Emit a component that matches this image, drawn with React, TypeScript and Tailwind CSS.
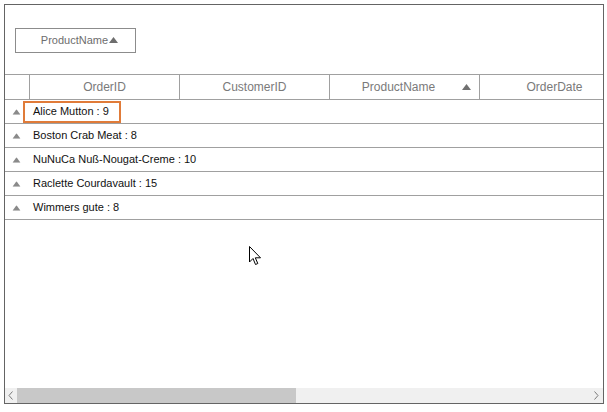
import React from 'react';

const COLUMNS = [
  { name: 'OrderID', width: 150 },
  { name: 'CustomerID', width: 150 },
  { name: 'ProductName', width: 150, sorted: true },
  { name: 'OrderDate', width: 150 },
];

const GROUPS = [
  'Alice Mutton : 9',
  'Boston Crab Meat : 8',
  'NuNuCa Nuß-Nougat-Creme : 10',
  'Raclette Courdavault : 15',
  'Wimmers gute : 8',
];

function UpTriangle({ className }: { className?: string }) {
  return (
    <svg width="9" height="6" viewBox="0 0 9 6" className={className}>
      <polygon points="4.5,0 9,6 0,6" fill="currentColor" />
    </svg>
  );
}

export default function App() {
  return (
    <div className="w-[607px] h-[412px] bg-white p-[4px] font-['Liberation_Sans',Arial,sans-serif] relative">
      <div className="w-[600px] h-[400px] border border-[#646464] flex flex-col overflow-hidden">
        {/* Group drop area */}
        <div className="h-[70px] pl-[10px] pt-[23px] border-b border-[#a0a0a0]">
          <div className="w-[121px] h-[25px] border border-[#8c8c8c] flex items-center justify-center gap-[1px] text-[11px] text-[#6d6d6d] pl-[8px]">
            <span>ProductName</span>
            <UpTriangle className="text-[#6d6d6d] mt-[-1px]" />
          </div>
        </div>

        {/* Column headers */}
        <div className="h-[25px] flex border-b border-[#a0a0a0] text-[12px] text-[#7a7a7a] shrink-0">
          <div className="w-[25px] border-r border-[#a0a0a0] shrink-0" />
          {COLUMNS.map((c) => (
            <div
              key={c.name}
              className="w-[150px] shrink-0 border-r border-[#a0a0a0] flex items-center justify-center relative"
            >
              <span className={c.sorted ? 'ml-[-12px]' : ''}>{c.name}</span>
              {c.sorted && <UpTriangle className="absolute right-[8px] top-[9px] text-[#707070]" />}
            </div>
          ))}
        </div>

        {/* Group rows */}
        <div className="flex-1 flex flex-col">
          {GROUPS.map((g, i) => (
            <div key={g} className="h-[24px] flex items-center border-b border-[#a0a0a0] text-[11px] text-[#111111] shrink-0">
              <div className="w-[18px] flex justify-center pl-[4px]">
                <UpTriangle className="text-[#8a8a8a] scale-90" />
              </div>
              {i === 0 ? (
                <div className="h-[22px] w-[98px] border-2 border-[#e07b39] flex items-center pl-[8px]">
                  {g}
                </div>
              ) : (
                <div className="pl-[10px]">{g}</div>
              )}
            </div>
          ))}
        </div>

        {/* Horizontal scrollbar */}
        <div className="h-[15px] flex items-center bg-[#f0f0f0] shrink-0">
          <div className="w-[12px] flex justify-center text-[#7a7a7a]">
            <svg width="6" height="9" viewBox="0 0 6 9">
              <polyline points="4.5,0.5 1,4.5 4.5,8.5" fill="none" stroke="currentColor" strokeWidth="1" />
            </svg>
          </div>
          <div className="w-[279px] h-[15px] bg-[#c8c8c8]" />
          <div className="flex-1" />
          <div className="w-[14px] flex justify-center text-[#7a7a7a]">
            <svg width="6" height="9" viewBox="0 0 6 9">
              <polyline points="1.5,0.5 5,4.5 1.5,8.5" fill="none" stroke="currentColor" strokeWidth="1" />
            </svg>
          </div>
        </div>
      </div>

      {/* Mouse pointer */}
      <svg className="absolute left-[249px] top-[246px]" width="13" height="20" viewBox="0 0 13 20">
        <path
          d="M0.5,0.5 L0.5,16 L4,12.5 L6.5,18.5 L8.8,17.5 L6.3,11.8 L11.5,11.8 Z"
          fill="#ffffff"
          stroke="#000000"
          strokeWidth="1"
          strokeLinejoin="miter"
        />
      </svg>
    </div>
  );
}
